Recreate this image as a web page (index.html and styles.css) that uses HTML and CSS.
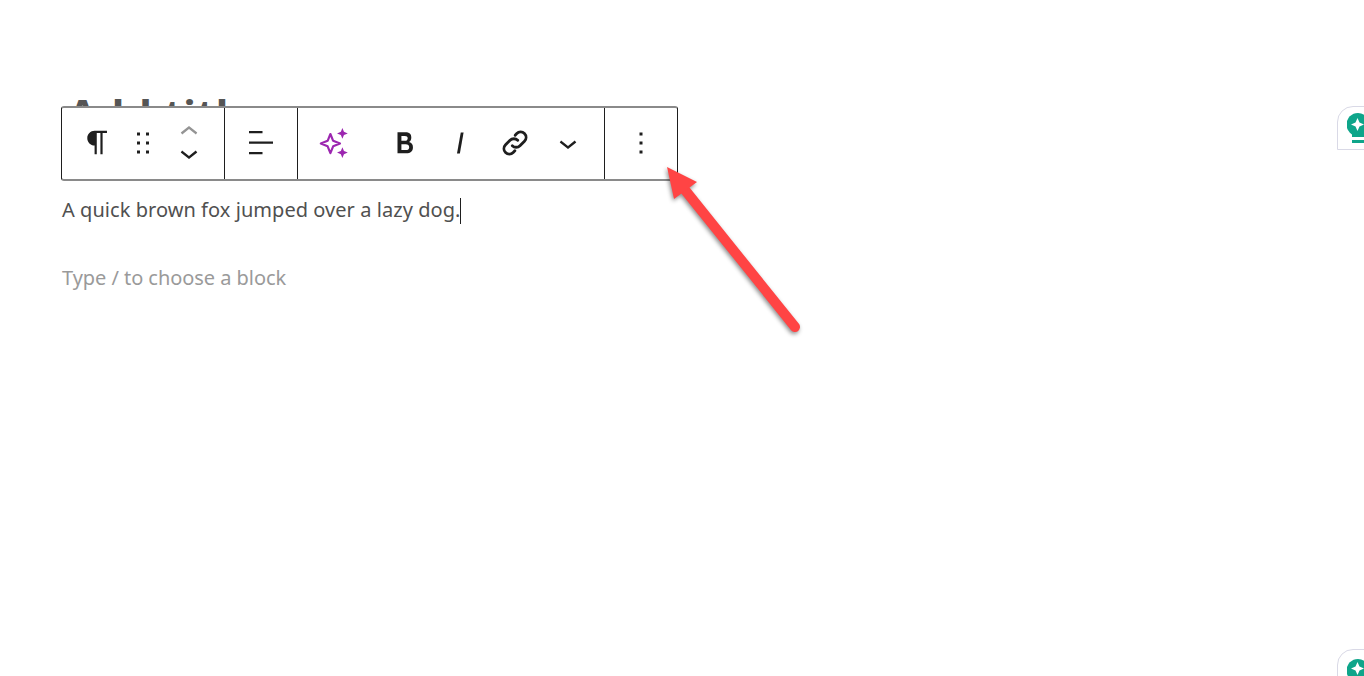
FILE: index.html
```html
<!DOCTYPE html>
<html lang="en">
<head>
  <meta charset="UTF-8">
  <title>Add title</title>
  <link rel="stylesheet" href="styles.css">
</head>
<body>
  <main class="editor">
    <h1 class="post-title">Add title</h1>
    <p class="block-text">A quick brown fox jumped over a lazy dog.<span class="caret"></span></p>
    <p class="block-placeholder">Type / to choose a block</p>
  </main>

  <!-- Floating block toolbar -->
  <div class="toolbar">
    <div class="toolbar-group group-block">
      <button class="tool-btn" aria-label="Paragraph">
        <svg viewBox="0 0 24 24" width="35" height="35"><path d="m9.99609 14v-.2251l.00391.0001v6.225h1.5v-14.5h2.5v14.5h1.5v-14.5h3v-1.5h-8.50391c-2.76142 0-5 2.23858-5 5 0 2.7614 2.23858 5 5 5z"/></svg>
      </button>
      <button class="tool-btn" aria-label="Drag">
        <svg viewBox="0 0 24 24" width="36" height="36"><path d="M8 7h2V5H8v2zm0 6h2v-2H8v2zm0 6h2v-2H8v2zm6-14v2h2V5h-2zm0 8h2v-2h-2v2zm0 6h2v-2h-2v2z"/></svg>
      </button>
      <div class="tool-btn mover">
        <svg class="mover-up" viewBox="0 0 24 24" width="36" height="36"><path d="M6.5 12.4L12 8l5.5 4.4-.9 1.2L12 10l-4.5 3.6-1-1.2z"/></svg>
        <svg viewBox="0 0 24 24" width="36" height="36"><path d="M17.5 11.6L12 16l-5.5-4.4.9-1.2L12 14l4.5-3.6 1 1.2z"/></svg>
      </div>
    </div>
    <div class="toolbar-group group-align">
      <button class="tool-btn" aria-label="Align">
        <svg viewBox="0 0 24 24" width="36" height="36"><path d="M13 5.5H4V4h9v1.5Zm7 7H4V11h16v1.5Zm-7 7H4V18h9v1.5Z"/></svg>
      </button>
    </div>
    <div class="toolbar-group group-format">
      <button class="tool-btn btn-ai" aria-label="AI">
        <svg viewBox="0 0 30 30" width="36" height="36" fill="#9c27b0"><path d="M12 7.500l2.300 5.700 5.700 2.300-5.700 2.300L12 23.500l-2.300-5.700-5.700-2.300 5.700-2.300z" fill="none" stroke="#9c27b0" stroke-width="1.800" stroke-linejoin="round"/><path d="M22 2.500l1.300 3.200 3.200 1.300-3.200 1.300L22 11.500l-1.300-3.200-3.200-1.300 3.200-1.300z"/><path d="M22 18.500l1.300 3.200 3.200 1.300-3.200 1.300L22 27.500l-1.300-3.200-3.200-1.300 3.200-1.300z"/></svg>
      </button>
      <button class="tool-btn btn-wide" aria-label="Bold">
        <svg viewBox="0 0 24 24" width="36" height="36"><path d="M14.700 11.300c1-.6 1.500-1.600 1.500-3 0-2.300-1.300-3.400-4-3.400H7v14h5.800c1.400 0 2.500-.3 3.300-1 .8-.7 1.200-1.700 1.200-2.900.1-1.900-.8-3.100-2.600-3.700zm-5.100-4h2.300c.6 0 1.100.1 1.400.4.3.3.5.7.5 1.200s-.2 1-.5 1.200c-.3.3-.8.4-1.400.4H9.600V7.300zm4.600 9c-.4.3-1 .4-1.700.4H9.600v-3.900h2.900c.7 0 1.300.2 1.700.5.4.3.6.8.6 1.500s-.2 1.200-.6 1.500z"/></svg>
      </button>
      <button class="tool-btn btn-wide" aria-label="Italic">
        <svg viewBox="0 0 24 24" width="36" height="36"><path d="M12.500 5L10 19h1.900l2.500-14z"/></svg>
      </button>
      <button class="tool-btn btn-wide" aria-label="Link">
        <svg viewBox="0 0 24 24" width="36" height="36" fill="none" stroke="#1e1e1e" stroke-width="1.900" stroke-linecap="round"><path d="M10.200 13.800a3.600 3.600 0 0 0 5.100 0l3-3a3.600 3.600 0 0 0-5.100-5.100l-1.100 1.100"/><path d="M13.800 10.200a3.600 3.600 0 0 0-5.100 0l-3 3a3.600 3.600 0 0 0 5.100 5.100l1.100-1.100"/></svg>
      </button>
      <button class="tool-btn btn-more" aria-label="More">
        <svg viewBox="0 0 24 24" width="36" height="36"><path d="M17.500 11.600L12 16l-5.500-4.400.9-1.200L12 14l4.500-3.600 1 1.200z"/></svg>
      </button>
    </div>
    <div class="toolbar-group group-options">
      <button class="tool-btn" aria-label="Options">
        <svg viewBox="0 0 24 24" width="36" height="36"><path d="M13 19h-2v-2h2v2zm0-6h-2v-2h2v2zm0-6h-2V5h2v2z"/></svg>
      </button>
    </div>
  </div>

  <!-- Annotation arrow -->
  <svg class="arrow" viewBox="0 0 160 180" width="160" height="180">
    <path d="M25 30L135 167" fill="none" stroke="#ff4444" stroke-width="10" stroke-linecap="round"/>
    <path d="M7 7L37 22L14 39z" fill="#ff4444"/>
  </svg>

  <!-- Side widgets cut off by the window edge -->
  <div class="side-widget widget-top">
    <svg viewBox="0 0 30 32" width="30" height="32"><circle cx="11" cy="11.500" r="11.500" fill="#0ea58a"/><path d="M5 18h12v6H5z" fill="#0ea58a"/><rect x="5" y="27" width="25" height="3" fill="#0ea58a"/><path d="M10.500 5l2 4.500 4.500 2-4.500 2-2 4.500-2-4.500-4.500-2 4.500-2z" fill="#fff"/></svg>
  </div>
  <div class="side-widget widget-bottom">
    <svg viewBox="0 0 30 32" width="30" height="32"><circle cx="11" cy="11.500" r="11.500" fill="#0ea58a"/><path d="M10.500 3l2 4.500 4.500 2-4.500 2-2 4.500-2-4.500-4.500-2 4.500-2z" fill="#fff"/></svg>
  </div>
</body>
</html>
```

FILE: styles.css
```css
html, body {
  margin: 0;
  height: 100%;
  overflow: hidden;
  background: #fff;
}

body {
  position: relative;
  font-family: "Noto Sans", sans-serif;
}

/* Editor content */
.editor {
  padding: 89px 0 0 62px;
}

.post-title {
  margin: 0 0 55px;
  padding-left: 6px;
  font-size: 42px;
  line-height: 50px;
  font-weight: 700;
  color: #555;
  letter-spacing: .8px;
}

.block-text,
.block-placeholder {
  margin: 0;
  font-size: 20px;
  line-height: 32px;
}

.block-text {
  color: #505050;
  margin-bottom: 36px;
  letter-spacing: .05px;
}

.block-placeholder {
  color: #9a9a9a;
  letter-spacing: -.05px;
}

.caret {
  display: inline-block;
  width: 1px;
  height: 26px;
  background: #1e1e1e;
  vertical-align: -7px;
}

/* Block toolbar */
.toolbar {
  position: absolute;
  left: 61px;
  top: 106px;
  display: flex;
  height: 75px;
  box-sizing: border-box;
  background: #fff;
  border: 1px solid #1e1e1e;
  border-top: 2px solid #8a8a8a;
  border-bottom: 2px solid #8a8a8a;
  border-radius: 3px;
}

.toolbar-group {
  display: flex;
  align-items: center;
  box-sizing: border-box;
  padding-bottom: 2px;
  border-right: 1px solid #1e1e1e;
}

.toolbar-group:last-child {
  border-right: 0;
}

.group-block {
  width: 163px;
  padding-left: 12px;
}

.group-align {
  width: 73px;
  justify-content: center;
}

.group-format {
  width: 307px;
  padding-left: 12px;
}

.group-options {
  width: 72px;
  justify-content: center;
}

.tool-btn {
  display: flex;
  flex-shrink: 0;
  align-items: center;
  justify-content: center;
  width: 46px;
  height: 48px;
  padding: 0;
  border: 0;
  background: none;
  color: #1e1e1e;
  fill: #1e1e1e;
}

.btn-ai {
  margin: 0 20px 0 1px;
}

.btn-wide {
  width: 55px;
}

.btn-more {
  width: 51px;
}

.mover {
  flex-direction: column;
}

.mover svg {
  flex-shrink: 0;
}

.mover-up {
  fill: #949494;
  margin-bottom: -15px;
}

/* Arrow over the toolbar corner */
.arrow {
  position: absolute;
  left: 660px;
  top: 160px;
  overflow: visible;
  filter: drop-shadow(-1px 2px 2px rgba(0, 0, 0, .45));
}

/* Side widgets */
.side-widget {
  position: absolute;
  left: 1337px;
  width: 60px;
  box-sizing: border-box;
  border: 1.500px solid #d9d9e6;
  border-radius: 16px 16px 0 0;
  padding-left: 9px;
}

.widget-top {
  top: 106px;
  height: 44px;
  padding-top: 6px;
}

.widget-bottom {
  top: 649px;
  height: 60px;
  padding-top: 9px;
}
```
